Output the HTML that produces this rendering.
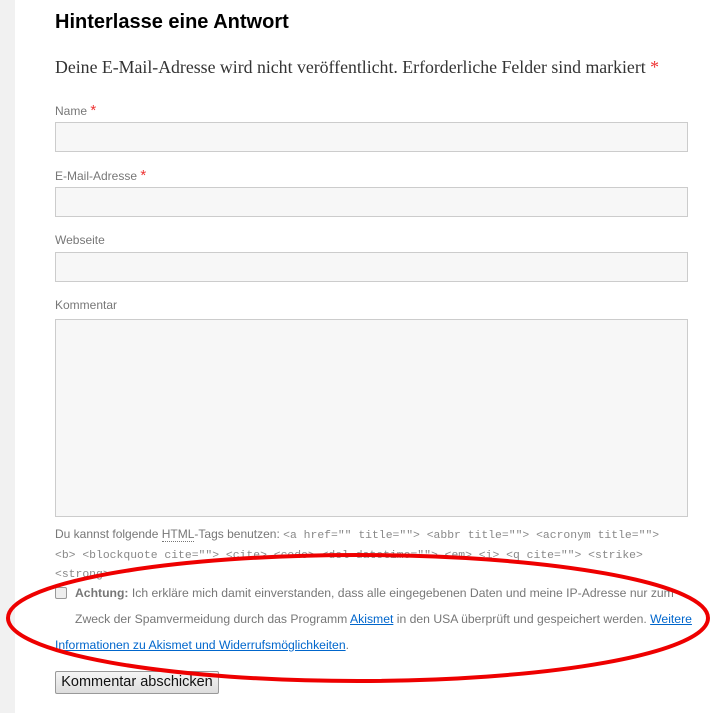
<!DOCTYPE html>
<html><head><meta charset="utf-8"><style>
body{margin:0;width:714px;height:713px;background:#fff;position:relative;overflow:hidden;font-family:"Liberation Sans",sans-serif}
.strip{position:absolute;left:0;top:0;width:15px;height:713px;background:#f1f1f1}
.a{position:absolute;left:55px}
h3{position:absolute;left:55px;top:11px;margin:0;font-size:20px;font-weight:bold;color:#000}
.note{top:57px;font-family:"Liberation Serif",serif;font-size:17.8px;color:#333;white-space:nowrap}
.req{color:#e33}
.lbl{font-size:12px;color:#777}
.inp{left:55px;width:631px;height:28px;border:1px solid #ccc;background:#f7f7f7}
.tags{font-size:12px;color:#777;line-height:17.5px;width:625px}
.tags code{font-family:"Liberation Mono",monospace;font-size:11.4px;color:#888}
.acc{font-size:12.2px;color:#777;white-space:nowrap}
a{color:#06c;text-decoration:underline}
.btn{top:671px;width:162px;height:21px;border:1px solid #999;border-radius:2px;background:linear-gradient(#f5f5f5,#ddd);font-size:14.5px;color:#111;text-align:center;line-height:21px}
</style></head><body>
<div class="strip"></div>
<h3>Hinterlasse eine Antwort</h3>
<div class="a note">Deine E-Mail-Adresse wird nicht veröffentlicht. Erforderliche Felder sind markiert <span class="req">*</span></div>
<div class="a lbl" style="top:102px">Name <span class="req" style="font-size:15px">*</span></div>
<div class="a inp" style="top:122px"></div>
<div class="a lbl" style="top:167px">E-Mail-Adresse <span class="req" style="font-size:15px">*</span></div>
<div class="a inp" style="top:187px"></div>
<div class="a lbl" style="top:233px">Webseite</div>
<div class="a inp" style="top:252px"></div>
<div class="a lbl" style="top:298px">Kommentar</div>
<div class="a inp" style="top:319px;height:196px"></div>
<div class="a tags" style="top:526px">Du kannst folgende <span style="border-bottom:1px dotted #777">HTML</span>-Tags benutzen: <code>&lt;a href="" title=""&gt; &lt;abbr title=""&gt; &lt;acronym title=""&gt; &lt;b&gt; &lt;blockquote cite=""&gt; &lt;cite&gt; &lt;code&gt; &lt;del datetime=""&gt; &lt;em&gt; &lt;i&gt; &lt;q cite=""&gt; &lt;strike&gt; &lt;strong&gt;</code></div>
<div class="a" style="top:587px;width:10px;height:10px;border:1px solid #999;border-radius:2px;background:#eee"></div>
<div class="acc" style="position:absolute;left:75px;top:586px"><b>Achtung:</b> Ich erkläre mich damit einverstanden, dass alle eingegebenen Daten und meine IP-Adresse nur zum</div>
<div class="acc" style="position:absolute;left:75px;top:612px">Zweck der Spamvermeidung durch das Programm <a>Akismet</a> in den USA überprüft und gespeichert werden. <a>Weitere</a></div>
<div class="acc" style="position:absolute;left:55px;top:638px"><a>Informationen zu Akismet und Widerrufsmöglichkeiten</a>.</div>
<div class="a btn">Kommentar abschicken</div>
<svg style="position:absolute;left:0;top:0" width="714" height="713"><ellipse cx="358" cy="618" rx="350" ry="63" fill="none" stroke="#e00" stroke-width="4"/></svg>
</body></html>
